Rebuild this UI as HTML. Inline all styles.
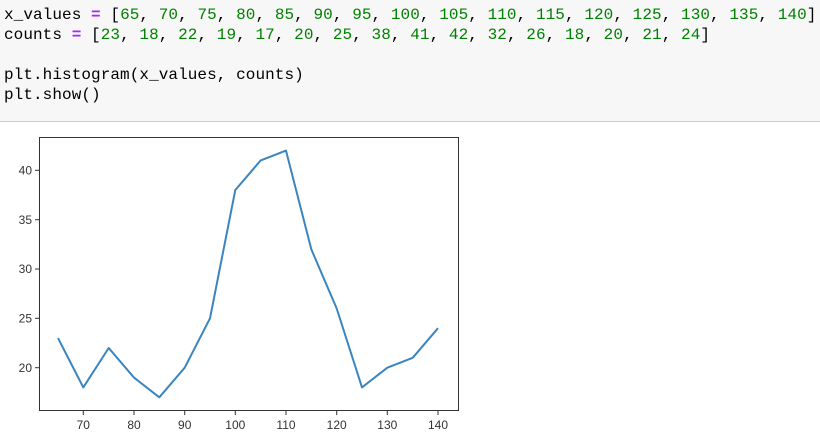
<!DOCTYPE html>
<html><head><style>
body{margin:0;width:820px;height:440px;background:#fff;overflow:hidden}
.code{position:absolute;left:0;top:0;width:820px;height:121px;background:#f7f7f7;border-bottom:1px solid #cfcfcf}
pre{margin:0;position:absolute;left:4px;top:5px;font-family:"Liberation Mono",monospace;font-size:16px;line-height:20px;color:#000;letter-spacing:0.07px}
.o{color:#aa22ff;font-weight:bold}.n{color:#008000}
svg{position:absolute;left:0;top:0}
svg text{font-family:"Liberation Sans",sans-serif;font-size:12px;fill:#333}
</style></head><body>
<div class="code"><pre>x_values <span class="o">=</span> [<span class="n">65</span>, <span class="n">70</span>, <span class="n">75</span>, <span class="n">80</span>, <span class="n">85</span>, <span class="n">90</span>, <span class="n">95</span>, <span class="n">100</span>, <span class="n">105</span>, <span class="n">110</span>, <span class="n">115</span>, <span class="n">120</span>, <span class="n">125</span>, <span class="n">130</span>, <span class="n">135</span>, <span class="n">140</span>]
counts <span class="o">=</span> [<span class="n">23</span>, <span class="n">18</span>, <span class="n">22</span>, <span class="n">19</span>, <span class="n">17</span>, <span class="n">20</span>, <span class="n">25</span>, <span class="n">38</span>, <span class="n">41</span>, <span class="n">42</span>, <span class="n">32</span>, <span class="n">26</span>, <span class="n">18</span>, <span class="n">20</span>, <span class="n">21</span>, <span class="n">24</span>]

plt.histogram(x_values, counts)
plt.show()</pre></div>
<svg width="820" height="440">
<rect x="39.5" y="137.5" width="419" height="273" fill="none" stroke="#333" stroke-width="1"/>
<polyline fill="none" stroke="#3a85c0" stroke-width="2" stroke-linejoin="round" points="58,338.1 83.3,387.4 108.7,348 134,377.6 159.3,397.3 184.7,367.7 210,318.3 235.3,190 260.7,160.4 286,150.6 311.3,249.3 336.7,308.5 362,387.4 387.3,367.7 412.7,357.8 438,328.2"/>
<g stroke="#333">
<line x1="35" x2="39" y1="170.3" y2="170.3"/><line x1="35" x2="39" y1="219.7" y2="219.7"/><line x1="35" x2="39" y1="269" y2="269"/><line x1="35" x2="39" y1="318.3" y2="318.3"/><line x1="35" x2="39" y1="367.7" y2="367.7"/>
<line y1="411" y2="415" x1="83.3" x2="83.3"/><line y1="411" y2="415" x1="134" x2="134"/><line y1="411" y2="415" x1="184.7" x2="184.7"/><line y1="411" y2="415" x1="235.3" x2="235.3"/><line y1="411" y2="415" x1="286" x2="286"/><line y1="411" y2="415" x1="336.7" x2="336.7"/><line y1="411" y2="415" x1="387.3" x2="387.3"/><line y1="411" y2="415" x1="438" x2="438"/>
</g>
<g text-anchor="end"><text x="32" y="174.5">40</text><text x="32" y="224">35</text><text x="32" y="273">30</text><text x="32" y="322.5">25</text><text x="32" y="372">20</text></g>
<g text-anchor="middle"><text x="83.3" y="429">70</text><text x="134" y="429">80</text><text x="184.7" y="429">90</text><text x="235.3" y="429">100</text><text x="286" y="429">110</text><text x="336.7" y="429">120</text><text x="387.3" y="429">130</text><text x="438" y="429">140</text></g>
</svg>
</body></html>
